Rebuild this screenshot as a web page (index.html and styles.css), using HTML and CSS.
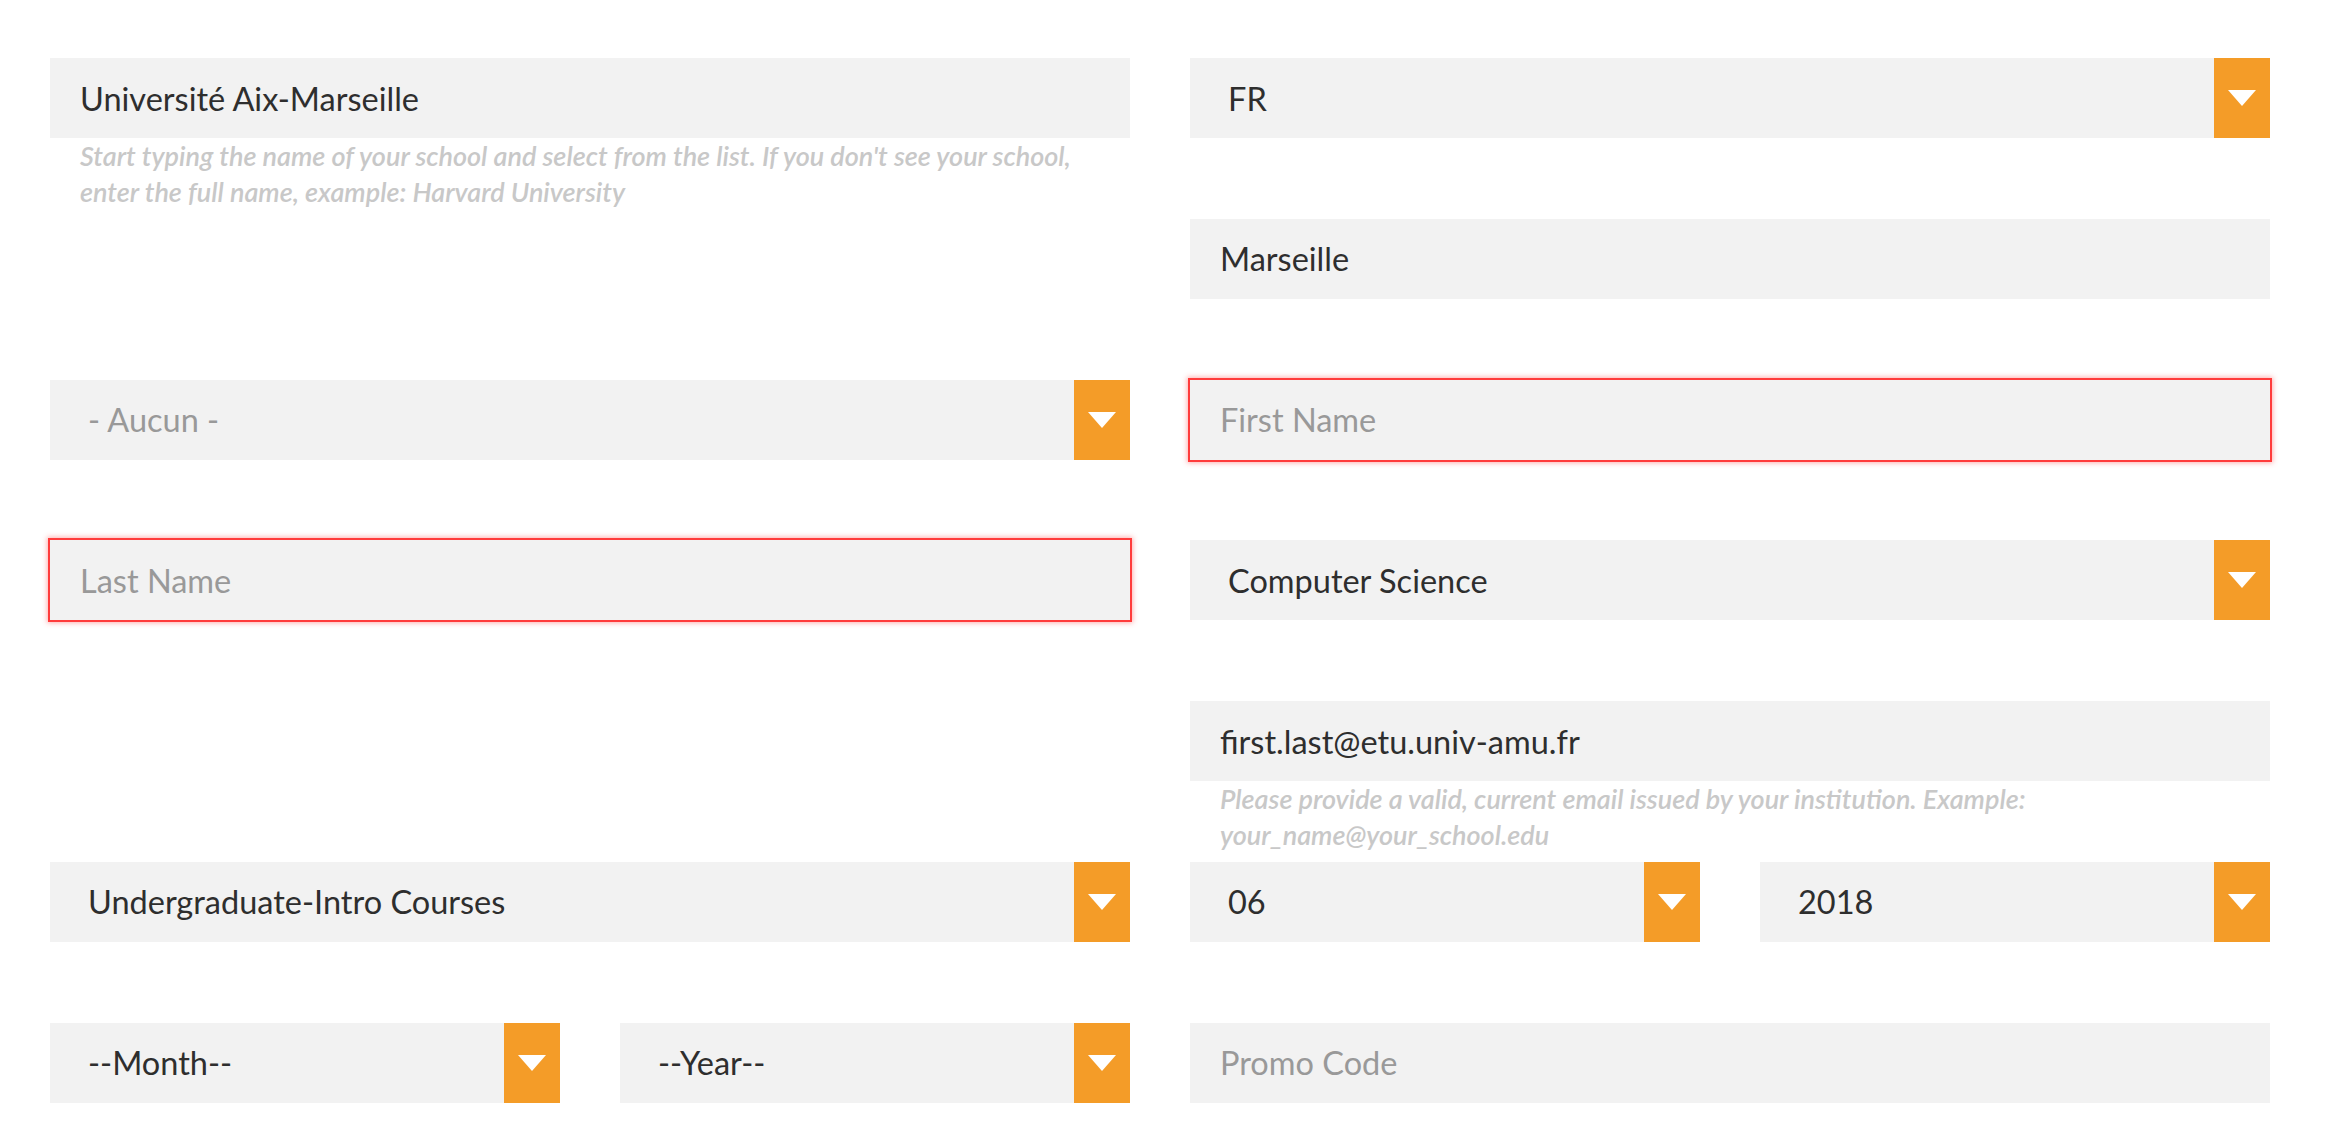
FILE: index.html
```html
<!DOCTYPE html>
<html lang="en">
<head>
<meta charset="utf-8">
<title>School information</title>
<link rel="stylesheet" href="styles.css">
</head>
<body>
<form class="form">
  <div class="cell">
    <input class="field" type="text" value="Université Aix-Marseille">
    <p class="help">Start typing the name of your school and select from the list. If you don't see your school, enter the full name, example: Harvard University</p>
  </div>
  <div class="cell">
    <div class="select">
      <select class="field"><option>FR</option></select>
      <span class="arrow"></span>
    </div>
  </div>

  <div class="cell right">
    <input class="field" type="text" value="Marseille">
  </div>

  <div class="cell">
    <div class="select">
      <select class="field empty"><option>- Aucun -</option></select>
      <span class="arrow"></span>
    </div>
  </div>
  <div class="cell">
    <input class="field invalid" type="text" placeholder="First Name">
  </div>

  <div class="cell">
    <input class="field invalid" type="text" placeholder="Last Name">
  </div>
  <div class="cell">
    <div class="select">
      <select class="field"><option>Computer Science</option></select>
      <span class="arrow"></span>
    </div>
  </div>

  <div class="cell right">
    <input class="field" type="email" value="first.last@etu.univ-amu.fr">
    <p class="help">Please provide a valid, current email issued by your institution. Example: your_name@your_school.edu</p>
  </div>

  <div class="cell">
    <div class="select">
      <select class="field"><option>Undergraduate-Intro Courses</option></select>
      <span class="arrow"></span>
    </div>
  </div>
  <div class="cell split">
    <div class="select">
      <select class="field"><option>06</option></select>
      <span class="arrow"></span>
    </div>
    <div class="select">
      <select class="field"><option>2018</option></select>
      <span class="arrow"></span>
    </div>
  </div>

  <div class="cell split">
    <div class="select">
      <select class="field"><option>--Month--</option></select>
      <span class="arrow"></span>
    </div>
    <div class="select">
      <select class="field"><option>--Year--</option></select>
      <span class="arrow"></span>
    </div>
  </div>
  <div class="cell">
    <input class="field" type="text" placeholder="Promo Code">
  </div>
</form>
</body>
</html>
```

FILE: styles.css
```css
html, body {
  margin: 0;
  padding: 0;
  background: #fff;
}

body {
  font-family: Lato, "Open Sans", sans-serif;
  color: #333;
}

.form {
  box-sizing: border-box;
  width: 2332px;
  padding: 58px 62px 0 50px;
  display: grid;
  grid-template-columns: 1fr 1fr;
  grid-auto-rows: 80px;
  column-gap: 60px;
  row-gap: 80.8px;
}

.cell {
  min-width: 0;
}

.right {
  grid-column: 2;
}

.split {
  display: grid;
  grid-template-columns: 1fr 1fr;
  column-gap: 60px;
}

.field {
  box-sizing: border-box;
  display: block;
  width: 100%;
  height: 80px;
  margin: 0;
  border: 0;
  border-radius: 0;
  outline: none;
  background: #f2f2f2;
  font-family: inherit;
  font-size: 32.5px;
  color: #2e2e2e;
  padding: 0 30px;
  -webkit-appearance: none;
  appearance: none;
}

.field::placeholder {
  color: #999;
  opacity: 1;
}

.field.invalid {
  box-shadow: 0 0 0 2px #ff3b3b, 0 0 5px 3px rgba(255, 80, 80, 0.45);
}

.select {
  display: flex;
  height: 80px;
}

.select .field {
  flex: 1;
  min-width: 0;
  padding: 0 20px 0 38px;
}

.select .field.empty {
  color: #999;
}

.arrow {
  flex: 0 0 56px;
  background: #f49c28;
  display: flex;
  align-items: center;
  justify-content: center;
}

.arrow::before {
  content: "";
  width: 0;
  height: 0;
  border-left: 14px solid transparent;
  border-right: 14px solid transparent;
  border-top: 16px solid #fff;
}

.help {
  margin: 0;
  padding: 0 30px;
  font-size: 27px;
  line-height: 36px;
  font-style: italic;
  font-weight: 600;
  color: #c8c8c8;
}
```
